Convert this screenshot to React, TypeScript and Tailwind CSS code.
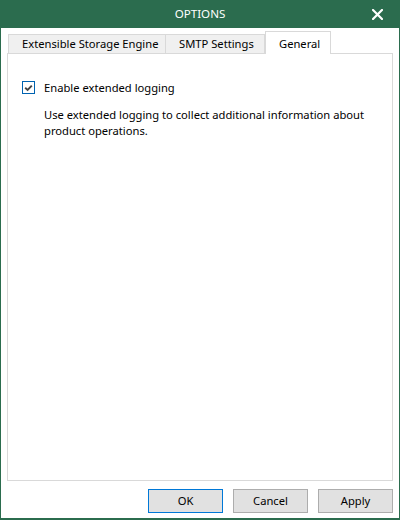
import React from "react";

export default function App() {
  const font = { fontFamily: '"Noto Sans", "Segoe UI", Arial, sans-serif' };
  return (
    <div
      className="w-[400px] h-[520px] bg-[#2b6c4e] flex flex-col text-[11.2px] text-black"
      style={font}
    >
      {/* Title bar */}
      <div className="h-[28px] flex items-center relative shrink-0">
        <div className="flex-1 text-center text-white text-[11.6px] leading-none">OPTIONS</div>
        <div className="absolute right-[17px] top-[9px] w-[11px] h-[11px]">
          <svg width="11" height="11" viewBox="0 0 11 11">
            <path d="M1 1 L10 10 M10 1 L1 10" stroke="white" strokeWidth="2.2" strokeLinecap="square" />
          </svg>
        </div>
      </div>
      {/* Body */}
      <div className="flex-1 mx-px mb-[2px] bg-white flex flex-col">
        {/* Tabs */}
        <div className="pl-[7px] pt-[4px] flex items-end h-[25px] shrink-0 relative z-10">
          <div className="w-[158px] h-[20px] mb-[-1px] bg-[#f0f0f0] border border-[#d9d9d9] flex items-center pl-[13px] leading-none whitespace-nowrap">
            Extensible Storage Engine
          </div>
          <div className="w-[99px] h-[20px] mb-[-1px] bg-[#f0f0f0] border border-l-0 border-[#d9d9d9] flex items-center pl-[13px] leading-none whitespace-nowrap">
            SMTP Settings
          </div>
          <div className="w-[66px] h-[23px] mb-[-1px] bg-white border border-b-0 border-[#d9d9d9] flex items-center pl-[13px] leading-none pt-[1px] whitespace-nowrap">
            General
          </div>
        </div>
        {/* Panel */}
        <div className="mx-[6px] h-[428px] border border-[#d9d9d9] bg-white flex flex-col pl-[14px] pt-[27px] shrink-0">
          <div className="flex items-center gap-[9px] h-[13px]">
            <div className="w-[13px] h-[13px] border border-[#0063b1] flex items-center justify-center bg-white">
              <svg width="9" height="8" viewBox="0 0 9 8">
                <path d="M1.2 3.8 L3.6 6 L7.8 1.6" fill="none" stroke="#444" strokeWidth="1.9" />
              </svg>
            </div>
            <span className="leading-none">Enable extended logging</span>
          </div>
          <div className="pl-[22px] mt-[13px] leading-[16px] w-[350px]">
            Use extended logging to collect additional information about product operations.
          </div>
        </div>
        {/* Buttons */}
        <div className="flex justify-end gap-[10px] pr-[6px] mt-[8px]">
          <button className="w-[75px] h-[24px] bg-[#e1e1e1] border border-[#0078d7] leading-none">OK</button>
          <button className="w-[75px] h-[24px] bg-[#e1e1e1] border border-[#adadad] leading-none">Cancel</button>
          <button className="w-[75px] h-[24px] bg-[#e1e1e1] border border-[#adadad] leading-none">Apply</button>
        </div>
      </div>
    </div>
  );
}
